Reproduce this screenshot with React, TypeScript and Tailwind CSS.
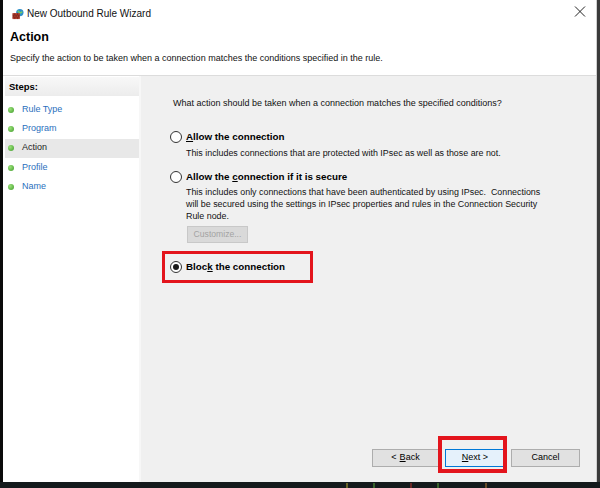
import React from "react";

const font = { fontFamily: '"Liberation Sans", Arial, sans-serif' };

function Radio({ checked }: { checked?: boolean }) {
  return (
    <span className="w-[12px] h-[12px] rounded-full border border-[#333333] bg-white flex items-center justify-center shrink-0">
      {checked && <span className="w-[6px] h-[6px] rounded-full bg-[#1a1a1a]" />}
    </span>
  );
}

function Dot() {
  return (
    <span className="w-[6px] h-[6px] rounded-full bg-[radial-gradient(circle_at_35%_35%,#9be37a,#3f9a2a)] shrink-0" />
  );
}

function FirewallIcon() {
  return (
    <svg width="12" height="12" viewBox="0 0 13 12">
      <circle cx="8.5" cy="4.5" r="4" fill="#2f8fc9" />
      <path d="M6 2.5 Q8 3 8 5 Q10 5 11 3.5" stroke="#7dd35a" strokeWidth="1.4" fill="none" />
      <rect x="0.5" y="5" width="8" height="6.5" fill="#b3402f" />
      <path d="M0.5 7.2H8.5M0.5 9.4H8.5M3 5V7.2M6 5V7.2M1.8 7.2V9.4M4.5 7.2V9.4M7.2 7.2V9.4M3 9.4V11.5M6 9.4V11.5" stroke="#6d1f16" strokeWidth="0.6" />
    </svg>
  );
}

export default function App() {
  return (
    <div className="w-[600px] h-[488px] bg-[#111416] flex flex-col overflow-hidden" style={font}>
      <div className="flex h-[482px]">
        <div className="w-[3px] bg-[#0a0a0a]" />
        <div className="w-[594px] bg-white flex flex-col relative border-r border-[#d0d0d0]">
          {/* Title bar */}
          <div className="h-[27px] flex items-center pl-[9px] pr-[8px] shrink-0">
            <FirewallIcon />
            <span className="ml-[3px] text-[10px] text-[#111]">New Outbound Rule Wizard</span>
            <div className="flex-1" />
            <svg width="12" height="11" viewBox="0 0 12 11" className="mr-[2px] -mt-[4px]">
              <path d="M1 0.5L11 10.5M11 0.5L1 10.5" stroke="#222" strokeWidth="1" />
            </svg>
          </div>
          {/* Header */}
          <div className="h-[49px] pl-[7px] flex flex-col shrink-0 border-b border-[#dcdcdc]">
            <div className="text-[12.5px] font-bold text-black leading-[16px] mt-[2px]">Action</div>
            <div className="text-[9px] text-[#111] mt-[7px] leading-[12px]">
              Specify the action to be taken when a connection matches the conditions specified in the rule.
            </div>
          </div>
          {/* Body */}
          <div className="flex flex-1 min-h-0">
            <div className="w-[138px] bg-white flex flex-col pt-[1px] pl-[2px] border-r-2 border-[#f7f7f7]">
              <div className="h-[19px] bg-gradient-to-b from-[#f8f8f8] to-[#ececec] flex items-center pl-[4px] pt-[1px] text-[9.5px] font-semibold text-black">
                Steps:
              </div>
              <div className="flex flex-col mt-[4px]">
                {["Rule Type", "Program", "Action", "Profile", "Name"].map((s) => (
                  <div
                    key={s}
                    className={`h-[19.3px] flex items-center pl-[3px] gap-[8px] ${s === "Action" ? "bg-[#e8e8e8]" : ""}`}
                  >
                    <Dot />
                    <span className={`text-[9px] ${s === "Action" ? "text-[#222]" : "text-[#2a6fbd]"}`}>{s}</span>
                  </div>
                ))}
              </div>
            </div>
            <div className="flex-1 bg-[#f0f0f0] flex flex-col pl-[32px] pr-[16px] pt-[21px] pb-[15px]">
              <div className="text-[9px] text-[#111] leading-[12px]">
                What action should be taken when a connection matches the specified conditions?
              </div>
              <div className="mt-[21px] flex items-center gap-[4px] -ml-[3px]">
                <Radio />
                <span className="text-[9.8px] font-bold text-black">
                  <span className="underline">A</span>llow the connection
                </span>
              </div>
              <div className="ml-[13px] mt-[2px] text-[8.9px] text-[#111] leading-[12px]">
                This includes connections that are protected with IPsec as well as those are not.
              </div>
              <div className="mt-[11px] flex items-center gap-[4px] -ml-[3px]">
                <Radio />
                <span className="text-[9.8px] font-bold text-black">
                  Allow the <span className="underline">c</span>onnection if it is secure
                </span>
              </div>
              <div className="ml-[13px] mt-[2px] text-[8.9px] text-[#111] leading-[12px] w-[362px]">
                This includes only connections that have been authenticated by using IPsec.&nbsp; Connections will be secured using the settings in IPsec properties and rules in the Connection Security Rule node.
              </div>
              <div className="ml-[14px] mt-[4px] w-[61px] h-[17px] bg-[#d9d9d9] border border-[#c8c8c8] flex items-center justify-center text-[8.6px] text-[#a3a3a3]">
                Customize...
              </div>
              <div className="mt-[8px] -ml-[11px] w-[151px] h-[32px] border-[3px] border-[#e3141c] flex items-center pl-[5px] gap-[4px]">
                <Radio checked />
                <span className="text-[9.8px] font-bold text-black">
                  Bloc<span className="underline">k</span> the connection
                </span>
              </div>
              <div className="flex-1" />
              <div className="flex items-center justify-end gap-[6px] relative">
                <div className="w-[67px] h-[18px] bg-[#e1e1e1] border border-[#adadad] flex items-center justify-center text-[9px] text-black">
                  &lt; <span className="underline ml-[3px]">B</span>ack
                </div>
                <div className="relative w-[60px] h-[18px] bg-[#e5f1fb] border border-[#0078d7] flex items-center justify-center text-[9px] text-black">
                  <span className="underline">N</span>ext &gt;
                  <div className="absolute -left-[8px] -top-[14px] w-[69px] h-[37px] border-[4px] border-[#e3141c]" />
                </div>
                <div className="w-[69px] h-[18px] bg-[#e1e1e1] border border-[#adadad] flex items-center justify-center text-[9px] text-black">
                  Cancel
                </div>
              </div>
            </div>
          </div>
        </div>
        <div className="w-[3px] bg-[#3a3a3a]" />
      </div>
      <svg width="600" height="6" viewBox="0 0 600 6" className="block">
        <rect width="600" height="6" fill="#141a1c" />
        <path d="M347 1V6" stroke="#b8a830" />
        <path d="M374 1V6" stroke="#5caa3a" />
        <path d="M411 1V6" stroke="#b8342c" />
        <path d="M438 1V6" stroke="#5caa3a" />
        <path d="M486 1V6" stroke="#b87a30" />
      </svg>
    </div>
  );
}
